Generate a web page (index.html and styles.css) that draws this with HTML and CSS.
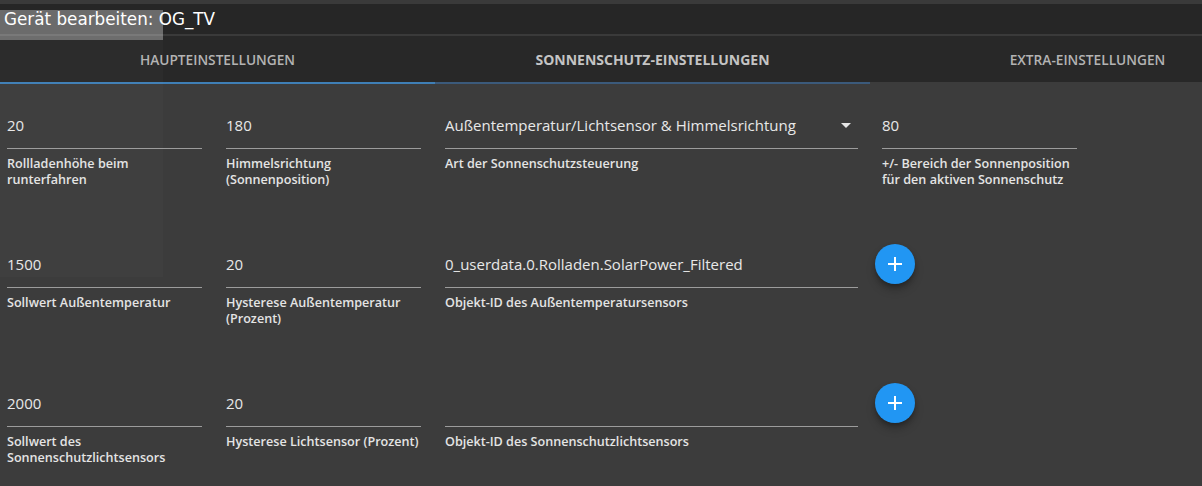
FILE: index.html
```html
<!DOCTYPE html>
<html lang="de">
<head>
<meta charset="utf-8">
<title>Gerät bearbeiten</title>
<link rel="stylesheet" href="styles.css">
</head>
<body>
<div class="page">
  <div class="topstrip"></div>
  <div class="titlebar">Gerät bearbeiten: OG_TV</div>
  <div class="divider"></div>
  <div class="tabs">
    <div class="tab">Haupteinstellungen</div>
    <div class="tab active">Sonnenschutz-Einstellungen</div>
    <div class="tab">Extra-Einstellungen</div>
  </div>
  <div class="indicator">
    <div class="ind-a"></div>
    <div class="ind-b"></div>
  </div>
  <div class="content">
    <div class="row">
      <div class="field">
        <div class="value">20</div>
        <div class="label">Rollladenhöhe beim runterfahren</div>
      </div>
      <div class="field">
        <div class="value">180</div>
        <div class="label">Himmelsrichtung (Sonnenposition)</div>
      </div>
      <div class="field select">
        <div class="value">Außentemperatur/Lichtsensor &amp; Himmelsrichtung</div>
        <span class="arrow"></span>
        <div class="label">Art der Sonnenschutzsteuerung</div>
      </div>
      <div class="field">
        <div class="value">80</div>
        <div class="label">+/- Bereich der Sonnenposition für den aktiven Sonnenschutz</div>
      </div>
    </div>
    <div class="row">
      <div class="field">
        <div class="value">1500</div>
        <div class="label">Sollwert Außentemperatur</div>
      </div>
      <div class="field">
        <div class="value">20</div>
        <div class="label">Hysterese Außentemperatur (Prozent)</div>
      </div>
      <div class="field">
        <div class="value">0_userdata.0.Rolladen.SolarPower_Filtered</div>
        <div class="label">Objekt-ID des Außentemperatursensors</div>
      </div>
      <div class="cell">
        <button class="add" type="button" aria-label="hinzufügen">
          <svg width="16" height="16" viewBox="0 0 16 16"><path d="M8 1v14M1 8h14" stroke="#fff" stroke-width="2" fill="none"/></svg>
        </button>
      </div>
    </div>
    <div class="row">
      <div class="field">
        <div class="value">2000</div>
        <div class="label">Sollwert des Sonnenschutzlichtsensors</div>
      </div>
      <div class="field">
        <div class="value">20</div>
        <div class="label nowrap">Hysterese Lichtsensor (Prozent)</div>
      </div>
      <div class="field">
        <div class="value"></div>
        <div class="label">Objekt-ID des Sonnenschutzlichtsensors</div>
      </div>
      <div class="cell">
        <button class="add" type="button" aria-label="hinzufügen">
          <svg width="16" height="16" viewBox="0 0 16 16"><path d="M8 1v14M1 8h14" stroke="#fff" stroke-width="2" fill="none"/></svg>
        </button>
      </div>
    </div>
  </div>
  <div class="overlay-strong"></div>
  <div class="overlay-soft"></div>
</div>
</body>
</html>
```

FILE: styles.css
```css
html, body {
  margin: 0;
  padding: 0;
  background: #3c3c3c;
}
body {
  width: 1202px;
  height: 486px;
  overflow: hidden;
  font-family: "Open Sans", "Noto Sans", sans-serif;
}
.page {
  position: relative;
  width: 1202px;
  height: 486px;
  overflow: hidden;
}
.topstrip {
  height: 4px;
  background: #3a3a3a;
}
.titlebar {
  height: 30px;
  background: #262626;
  color: #ffffff;
  font-family: "DejaVu Sans", sans-serif;
  font-size: 16.8px;
  line-height: 30px;
  padding-left: 4px;
  box-sizing: border-box;
  white-space: nowrap;
}
.divider {
  height: 2px;
  background: #3a3a3a;
}
.tabs {
  display: flex;
  height: 46px;
  background: #282828;
  overflow: hidden;
}
.tab {
  flex: 0 0 435px;
  display: flex;
  align-items: center;
  justify-content: center;
  text-transform: uppercase;
  font-size: 13.7px;
  font-weight: 600;
  color: #b3b3b3;
  white-space: nowrap;
}
.tab.active {
  font-size: 14px;
  font-weight: 700;
  color: #c4c4c4;
}
.indicator {
  display: flex;
  height: 2px;
  background: #3c3c3c;
}
.ind-a {
  width: 435px;
  background: #3f7fb6;
}
.ind-b {
  width: 435px;
  background: #3b5a7b;
}
.content {
  padding: 29px 0 0 7px;
}
.row {
  display: grid;
  grid-template-columns: 195px 195px 413px 195px;
  column-gap: 24px;
  height: 139px;
  align-items: start;
}
.field {
  position: relative;
}
.value {
  height: 35px;
  font-size: 15px;
  line-height: 24px;
  color: #e8e8e8;
  border-bottom: 1px solid #9c9c9c;
  white-space: nowrap;
}
.label {
  margin-top: 7px;
  font-size: 12.6px;
  font-weight: 600;
  line-height: 16px;
  color: #e4e4e4;
}
.label.nowrap {
  white-space: nowrap;
}
.arrow {
  position: absolute;
  right: 7px;
  top: 10px;
  width: 0;
  height: 0;
  border-left: 5px solid transparent;
  border-right: 5px solid transparent;
  border-top: 5px solid #e6e6e6;
}
.cell {
  position: relative;
}
.add {
  display: flex;
  align-items: center;
  justify-content: center;
  width: 40px;
  height: 40px;
  margin: -8px 0 0 -7px;
  padding: 0;
  border: none;
  border-radius: 50%;
  background: #2196f3;
  box-shadow: 0 3px 5px -1px rgba(0,0,0,0.3), 0 6px 10px 0 rgba(0,0,0,0.2);
}
.overlay-strong {
  position: absolute;
  left: 0;
  top: 10px;
  width: 163px;
  height: 30px;
  background: rgba(255,255,255,0.32);
  pointer-events: none;
}
.overlay-soft {
  position: absolute;
  left: 0;
  top: 40px;
  width: 163px;
  height: 237px;
  background: rgba(255,255,255,0.018);
  pointer-events: none;
}
```
